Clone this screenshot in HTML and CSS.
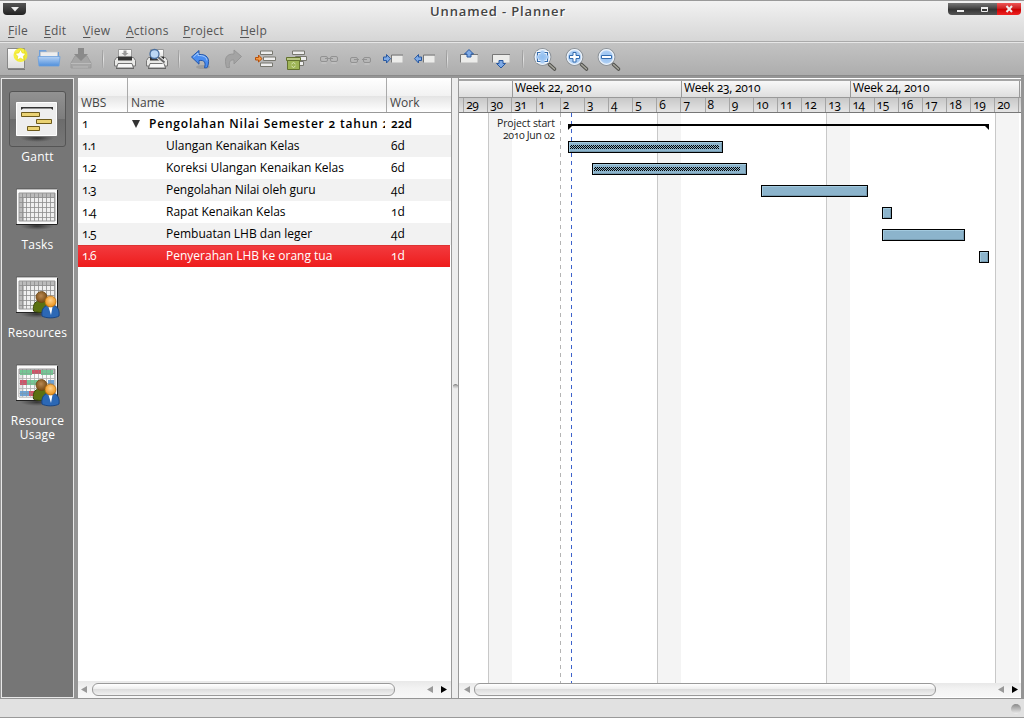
FILE: index.html
```
<!DOCTYPE html>
<html lang="id">
<head>
<meta charset="utf-8">
<title>Unnamed - Planner</title>
<link rel="stylesheet" href="styles.css">
</head>
<body>
<svg class="defs" width="0" height="0" aria-hidden="true">
  <defs>
    <linearGradient id="blue" x1="0" y1="0" x2="0" y2="1"><stop offset="0" stop-color="#b7d2f3"/><stop offset="1" stop-color="#4f8fdc"/></linearGradient>
    <linearGradient id="paper" x1="0" y1="0" x2="0" y2="1"><stop offset="0" stop-color="#ffffff"/><stop offset="1" stop-color="#dededc"/></linearGradient>
    <radialGradient id="lens"><stop offset="0" stop-color="#8fbdf0"/><stop offset=".65" stop-color="#a9ccf4"/><stop offset="1" stop-color="#d3e4f7"/></radialGradient>
    <radialGradient id="brown" cx=".45" cy=".4"><stop offset="0" stop-color="#b98850"/><stop offset="1" stop-color="#80541f"/></radialGradient>
    <radialGradient id="orange" cx=".5" cy=".4"><stop offset="0" stop-color="#ffd08a"/><stop offset="1" stop-color="#ee9a28"/></radialGradient>
    <radialGradient id="shade"><stop offset="0" stop-color="#222" stop-opacity=".8"/><stop offset="1" stop-color="#333" stop-opacity="0"/></radialGradient>
    <pattern id="cells" width="4" height="5" patternUnits="userSpaceOnUse"><path d="M0 .5H4M.5 0V5" stroke="#8d8d8d" stroke-width=".8"/></pattern>
    <pattern id="hatch" width="2" height="2" patternUnits="userSpaceOnUse"><path d="M0 0h1v1h-1zM1 1h1v1h-1z" fill="#000"/></pattern>
    <g id="sheet">
      <ellipse cx="23" cy="39" rx="17" ry="4" fill="url(#shade)"/>
      <path d="M2.500 2.500h41v35h-41z" fill="#fafafa" stroke="#fff"/>
      <path d="M2.500 37.500v-35.500h40.500" fill="none" stroke="#444" opacity=".7"/>
      <path d="M2 37.500h41.500v-35" fill="none" stroke="#222"/>
      <path d="M5 6h36v28H5z" fill="#efefef"/>
      <path d="M5 6h36v5H5zM5 11h5v23H5z" fill="#bbb"/>
      <path d="M5 6h36v28H5z" fill="url(#cells)" stroke="#999"/>
    </g>
    <g id="people">
      <path d="M19.500 36c-1-7 2-10.500 8-10.500 5 0 8 3 8 10-4 2.500-12 2.500-16 .5z" fill="#5b7112" stroke="#39480a"/>
      <circle cx="27.500" cy="22" r="5.500" fill="url(#brown)" stroke="#68420f" stroke-width=".7"/>
      <path d="M28 41c-1-8 3-11 8.500-11s9.500 3 8.500 11c-4 2.500-13 2.500-17 0z" fill="#2c68b5" stroke="#194684"/>
      <path d="M34.500 32h4l-1.500 8z" fill="#fff"/>
      <circle cx="36.500" cy="26.500" r="5.500" fill="url(#orange)" stroke="#b36807" stroke-width=".7"/>
    </g>
    <g id="printer">
      <path d="M9.500 6.500h13v9h-13z" fill="url(#paper)" stroke="#999"/>
      <path d="M7.500 14.500h17l2 3v5.500h-21V17.500z" fill="#e9e9e7" stroke="#777"/>
      <path d="M9 13.500h14v4H9z" fill="#333"/>
      <path d="M9 20.500h14l1.500 4.500h-17z" fill="#f7f7f7" stroke="#555" stroke-width=".8"/>
      <path d="M7 25.500h18" stroke="#666"/>
    </g>
    <g id="magnifier">
      <path d="M21.500 21.500l5 4.500" stroke="#50504c" stroke-width="3.600" stroke-linecap="round"/>
      <path d="M21.500 21.500l5 4.500" stroke="#a5a59c" stroke-width="1.600" stroke-linecap="round"/>
      <circle cx="14.500" cy="14" r="8.300" fill="url(#lens)" stroke="#8d9399" stroke-width="1.200"/>
      <circle cx="14.500" cy="14" r="7.300" fill="none" stroke="#edf3fa" stroke-width="1.200"/>
    </g>
    <g id="link">
      <rect x="0.500" y="0.500" width="7" height="5" rx="1.500" fill="none" stroke="#929292"/>
      <path d="M1.500 7h5" stroke="#c8c8c8"/>
    </g>
  </defs>
</svg>

<div class="window">
  <header class="top">
    <div class="titlebar">
      <div class="window-menu"><svg width="8" height="5"><path d="M0 0h8l-4 4.500z" fill="#eee"/></svg></div>
      <div class="title">Unnamed - Planner</div>
      <div class="window-buttons">
        <span class="wbtn"><svg width="25" height="12"><path d="M9 7h7v2H9z" fill="#eee"/></svg></span>
        <span class="wbtn"><svg width="24" height="12"><path d="M8.500 4.500h6v4h-6z" fill="none" stroke="#eee"/><path d="M8 5h7" stroke="#eee" stroke-width="2"/></svg></span>
        <span class="wbtn close"><svg width="24" height="12"><path d="M9.500 3l5.500 6M15 3l-5.500 6" stroke="#eee" stroke-width="2"/></svg></span>
      </div>
    </div>
    <nav class="menubar">
      <span class="menu m1"><u>F</u>ile</span><span class="menu m2"><u>E</u>dit</span><span class="menu m3"><u>V</u>iew</span><span class="menu m4"><u>A</u>ctions</span><span class="menu m5"><u>P</u>roject</span><span class="menu m6"><u>H</u>elp</span>
    </nav>
  </header>

  <div class="toolbar">
    <svg class="tool" viewBox="0 0 32 32"><path d="M6.500 5.500h17v20h-17z" fill="url(#paper)" stroke="#888"/><path d="M7 26.500h17" stroke="#555" opacity=".6"/><circle cx="19.500" cy="12" r="7" fill="#f5ee24" opacity=".85"/><path d="M19.500 6.500l1.700 3.400 3.800.6-2.700 2.700.6 3.800-3.400-1.800-3.400 1.800.6-3.800L14 10.500l3.800-.6z" fill="#fff" stroke="#e8d800" stroke-width=".6"/></svg>
    <svg class="tool" viewBox="0 0 32 32"><path d="M6 7h7l1 2h12v8H6z" fill="#6f9fd9"/><path d="M7.500 9h17v6h-17z" fill="#eee" stroke="#c8c8c8" stroke-width=".7"/><path d="M5 13.500h22l-1 9.500H6z" fill="url(#blue)" stroke="#6b9fdd" stroke-width=".8"/></svg>
    <svg class="tool" viewBox="0 0 32 32"><path d="M10 13h12l4 7v5H6v-5z" fill="#a5a5a5" stroke="#9b9b9b"/><path d="M6 20.500h20" stroke="#bcbcbc"/><path d="M13 5h6v6h4l-7 7-7-7h4z" fill="#8a8a8a"/><path d="M8 24h15" stroke="#bcbcbc"/></svg>
    <i class="sep"></i>
    <svg class="tool" viewBox="0 0 32 32"><use href="#printer"/><path d="M14.500 7.500h3v2.500h2L16 13l-3.500-3h2z" fill="#999"/></svg>
    <svg class="tool" viewBox="0 0 32 32"><use href="#printer"/><path d="M17 14l6.500 5.500" stroke="#eee" stroke-width="4"/><path d="M17 14l6.500 5.500" stroke="#666" stroke-width="2"/><circle cx="13.500" cy="11" r="4.500" fill="#bcd7f4" stroke="#496f9f" stroke-width="1.300"/></svg>
    <i class="sep"></i>
    <svg class="tool" viewBox="0 0 32 32"><ellipse cx="18" cy="24" rx="7" ry="2" fill="#777" opacity=".35"/><path d="M6.500 14L14 7.500v4c8-.5 11.500 4 8.500 12.500 0 .7-1.500.8-3 .8 1.500-5.300.2-8-5.500-7.300v3.700z" fill="#4a8df0" stroke="#2456aa"/><path d="M8.500 14L13 10v2.500c5 0 8.500 1 9 5" fill="none" stroke="#a9cdfb"/></svg>
    <svg class="tool" viewBox="0 0 32 32"><path d="M24.500 13.500L17 7v4C9 11 7 15 9.500 24.500h3c-.9-5.500.6-8 4.500-7.500v4z" fill="#a4a4a4" stroke="#969696"/></svg>
    <svg class="tool" viewBox="0 0 32 32"><path d="M11.500 8h12v3.500h-12zM14.500 14h12v3.500h-12zM11.500 20h12v3.500h-12z" fill="#eee" stroke="#77776f"/><path d="M6.500 14.500h3v-2.500l3.500 3.700-3.500 3.300v-2h-3z" fill="#f49a45" stroke="#b7500b"/></svg>
    <svg class="tool" viewBox="0 0 32 32"><path d="M11.500 8h12v3.500h-12zM14.500 13.500h11v4h-11zM15.500 18.500h7v4h-7z" fill="#eee" stroke="#77776f"/><path d="M5.500 14.500h14v3h-14z" fill="#bac786" stroke="#63722f"/><path d="M6.500 17.500h12v9h-12z" fill="#9fb557" stroke="#63722f"/><path d="M10.500 21l2-1.500 2 1.500M14.500 23l-2 1.500-2-1.500" fill="none" stroke="#d9e4b6"/></svg>
    <svg class="tool" viewBox="0 0 32 32"><use href="#link" x="7" y="13"/><use href="#link" x="17" y="13"/><path d="M12 15.500h8" stroke="#929292"/></svg>
    <svg class="tool" viewBox="0 0 32 32"><use href="#link" x="5" y="14"/><use href="#link" x="18" y="14"/><path d="M9 16.500h5M17 16.500h5" stroke="#929292"/></svg>
    <svg class="tool" viewBox="0 0 32 32"><path d="M14.500 12.500h11v7h-11z" fill="#ececea"/><path d="M14.500 19.500v-7.500h11.500" fill="none" stroke="#777"/><path d="M6.500 14h3v-2.500l4 4.200-4 4.300v-2.500h-3z" fill="#7eaae6" stroke="#2858a0"/></svg>
    <svg class="tool" viewBox="0 0 32 32"><path d="M14.500 12.500h11v7h-11z" fill="#ececea"/><path d="M14.500 19.500v-7.500h11.500" fill="none" stroke="#777"/><path d="M12.500 14H9.500v-2.500l-4 4.200 4 4.300v-2.500h3z" fill="#7eaae6" stroke="#2858a0"/></svg>
    <i class="sep"></i>
    <svg class="tool" viewBox="0 0 32 32"><path d="M7.500 11.500h17v8h-17z" fill="#ececea"/><path d="M7.500 19.500v-8h17.500" fill="none" stroke="#777"/><path d="M14 14v-3h-2.500L16 6.500l4.500 4.500H18v3z" fill="#7eaae6" stroke="#2858a0"/></svg>
    <svg class="tool" viewBox="0 0 32 32"><path d="M7.500 11.500h17v8h-17z" fill="#ececea"/><path d="M7.500 19.500v-8h17.500" fill="none" stroke="#777"/><path d="M14 17.500v3h-2.500l4.500 4.500 4.500-4.500H18v-3z" fill="#7eaae6" stroke="#2858a0"/></svg>
    <i class="sep"></i>
    <svg class="tool zoom" viewBox="0 0 32 32"><use href="#magnifier"/><path d="M9.500 12.500v-3h3M16.500 9.500h3v3M19.500 15.500v3h-3M12.500 18.500h-3v-3" fill="none" stroke="#fff" stroke-width="2.500"/><path d="M9.500 12.500v-3h3M16.500 9.500h3v3M19.500 15.500v3h-3M12.500 18.500h-3v-3" fill="none" stroke="#346cae" stroke-width="1.200"/></svg>
    <svg class="tool" viewBox="0 0 32 32"><use href="#magnifier"/><path d="M13 9.500h3v3h3.500v3H16v3.500h-3v-3.500H9.500v-3H13z" fill="#fff" stroke="#346cae"/></svg>
    <svg class="tool" viewBox="0 0 32 32"><use href="#magnifier"/><path d="M9.500 12.500h10v3h-10z" fill="#fff" stroke="#346cae"/></svg>
  </div>

  <main class="main">
    <aside class="sidebar">
      <div class="view">
        <div class="view-icon active"><svg width="46" height="44"><ellipse cx="23" cy="39" rx="17" ry="4" fill="url(#shade)"/><path d="M2.500 3.500h40v33h-40z" fill="#eee" stroke="#fff"/><path d="M2 37.500h41.500v-34" fill="none" stroke="#777"/><path d="M7 8h32v3l-2-1.500H9L7 11z" fill="#333"/><path d="M7.500 13.500h18v4h-18zM22.500 20.500h15v4h-15zM13.500 27.500h12v4h-12z" fill="#ead273" stroke="#6d5a1b"/></svg></div>
        <div class="view-label">Gantt</div>
      </div>
      <div class="view">
        <div class="view-icon"><svg width="46" height="44"><use href="#sheet"/></svg></div>
        <div class="view-label">Tasks</div>
      </div>
      <div class="view">
        <div class="view-icon"><svg width="46" height="44"><use href="#sheet"/><use href="#people"/></svg></div>
        <div class="view-label">Resources</div>
      </div>
      <div class="view">
        <div class="view-icon"><svg width="46" height="44"><use href="#sheet"/><path d="M5 11h36v23H5z" fill="#fff" opacity=".6"/><path d="M6 7h12v5H6zM27 7h12v5H27zM13 17h12v5H13z" fill="#75c795"/><path d="M18 7h9v4h-9zM6 17h7v5H6zM15 28h6v5h-6z" fill="#cf5468"/><path d="M6 28h9v5H6zM34 17h6v5h-6z" fill="#6ea3d4"/><path d="M5 6h36v28H5z" fill="url(#cells)" opacity=".45"/><use href="#people"/></svg></div>
        <div class="view-label two">Resource Usage</div>
      </div>
    </aside>

    <section class="tree">
      <div class="tree-head"><span>WBS</span><span>Name</span><span>Work</span></div>
      <div class="tree-body">
        <div class="row summary"><span>1</span><span class="name"><svg class="expander" width="8" height="8"><path d="M0 0h8l-4 8z" fill="#333"/></svg><b class="sum">Pengolahan Nilai Semester 2 tahun 2</b></span><span><b>22d</b></span></div>
        <div class="row"><span>1.1</span><span class="name">Ulangan Kenaikan Kelas</span><span>6d</span></div>
        <div class="row"><span>1.2</span><span class="name">Koreksi Ulangan Kenaikan Kelas</span><span>6d</span></div>
        <div class="row"><span>1.3</span><span class="name guru">Pengolahan Nilai oleh guru</span><span>4d</span></div>
        <div class="row"><span>1.4</span><span class="name">Rapat Kenaikan Kelas</span><span>1d</span></div>
        <div class="row"><span>1.5</span><span class="name">Pembuatan LHB dan leger</span><span>4d</span></div>
        <div class="row selected"><span>1.6</span><span class="name">Penyerahan LHB ke orang tua</span><span>1d</span></div>
      </div>
      <div class="scroll tree-scroll">
        <svg width="6" height="7"><path d="M6 0v7L0 3.500z" fill="#999"/></svg><div class="thumb"></div>
        <svg class="back" width="6" height="7"><path d="M6 0v7L0 3.500z" fill="#999"/></svg><svg width="6" height="7"><path d="M0 0v7l6-3.500z" fill="#000"/></svg>
      </div>
    </section>

    <div class="handle"><span></span></div>

    <section class="gantt">
      <div class="weeks"><span></span><span>Week 22, 2010</span><span>Week 23, 2010</span><span>Week 24, 2010</span><span></span></div>
      <div class="days"><span></span><span>29</span><span>30</span><span>31</span><span>1</span><span>2</span><span>3</span><span>4</span><span>5</span><span>6</span><span>7</span><span>8</span><span>9</span><span>10</span><span>11</span><span>12</span><span>13</span><span>14</span><span>15</span><span>16</span><span>17</span><span>18</span><span>19</span><span>20</span><span></span></div>
      <svg class="chart" width="562" height="570" viewBox="459 113 562 570">
        <path d="M488 113h24v570h-24zM657 113h24v570h-24zM826 113h24v570h-24zM995 113h24v570h-24z" fill="#f4f4f4"/>
        <path d="M488.500 113v570M657.500 113v570M826.500 113v570M995.500 113v570" stroke="#c8c8c8"/>
        <path d="M560.500 113v570" stroke="#b4b4b4" stroke-dasharray="4 4"/>
        <path class="today" d="M571.500 113v570"/>
        <text x="497" y="127" textLength="58">Project start</text>
        <text x="503" y="139" textLength="52">2010 Jun 02</text>
        <path d="M568 124h421v6l-4-4H572l-4 4z"/>
        <g class="bars">
          <rect x="568.500" y="141.500" width="154" height="11"/>
          <rect x="592.500" y="163.500" width="154" height="11"/>
          <rect x="761.500" y="185.500" width="106" height="11"/>
          <rect x="882.500" y="207.500" width="9" height="11"/>
          <rect x="882.500" y="229.500" width="82" height="11"/>
          <rect x="979.500" y="251.500" width="9" height="11"/>
        </g>
        <path class="bar-light" d="M569.500 152v-9.500H722M593.500 174v-9.500H746M762.500 196v-9.500H867M883.500 218v-9.500H891M883.500 240v-9.500H964M980.500 262v-9.500H988"/>
        <path class="bar-dark" d="M570 151.500h151.500V143M594 173.500h151.500V165M763 195.500h103.500V187M884 217.500h6.500V209M884 239.500h79.500V231M981 261.500h6.500V253"/>
        <path d="M570 145h149v4H570zM594 167h146v4H594z" fill="url(#hatch)"/>
      </svg>
      <div class="scroll gantt-scroll">
        <svg width="6" height="7"><path d="M6 0v7L0 3.500z" fill="#999"/></svg><div class="thumb"></div>
        <svg class="back" width="6" height="7"><path d="M6 0v7L0 3.500z" fill="#999"/></svg><svg width="6" height="7"><path d="M0 0v7l6-3.500z" fill="#000"/></svg>
      </div>
    </section>
  </main>
  <footer class="status"><span class="grip"></span></footer>
</div>
</body>
</html>
```
FILE: styles.css
```
* { box-sizing: border-box; }
body { margin: 0; font: 12px/22px "Open Sans", "Noto Sans", sans-serif; font-feature-settings: "onum" 1, "zero" 1; color: #000; overflow: hidden; }
svg { display: block; flex: none; }
.defs { height: 0; }
.window { width: 1024px; height: 718px; display: flex; flex-direction: column; background: #959595; }

.top { height: 43px; border-top: 1px solid #999; border-bottom: 1px solid #e6e6e6; background: linear-gradient(#f2f2f2, #d5d5d5); box-shadow: inset 0 -1px #aaa; display: flex; flex-direction: column; }
.titlebar { height: 20px; display: flex; justify-content: space-between; align-items: flex-start; padding: 2px 3px 0; }
.window-menu { width: 23px; height: 12px; margin-right: 22px; background: linear-gradient(#555, #222); border-radius: 0 0 4px 4px; display: flex; align-items: center; justify-content: center; }
.title { font-weight: 600; font-size: 13px; line-height: 18px; letter-spacing: .85px; color: #444; text-shadow: 1px 1px #fff; margin-top: -1px; }
.window-buttons { display: flex; border-radius: 0 0 4px 4px; overflow: hidden; }
.wbtn { height: 12px; background: linear-gradient(#777, #444 45%, #333 50%, #555); }
.close { background: linear-gradient(#e55, #c22 45%, #c00 50%, #e22); }
.menubar { display: flex; padding-left: 8px; color: #555; line-height: 20px; height: 20px; letter-spacing: .25px; }
.menu { flex: none; }
.menu u { text-underline-offset: 2px; }
.m1 { width: 36px; } .m2 { width: 39px; } .m3 { width: 43px; } .m4 { width: 57px; } .m5 { width: 57px; }

.toolbar { height: 32px; display: flex; padding-left: 1px; background: linear-gradient(#c3c3c3, #adadad); }
.tool { width: 32px; height: 32px; }
.zoom { margin-left: -1px; }
.sep { width: 12px; height: 18px; margin-top: 7px; background: linear-gradient(#aaa, #999, #aaa) 5px 0 / 1px 100% no-repeat, linear-gradient(#bbb, #e4e4e4, #bbb) 6px 0 / 1px 100% no-repeat; }

.main { height: 624px; display: flex; padding: 2px 2px 1px 1px; border-top: 1px solid #8a8a8a; }
.sidebar { width: 73px; margin-right: 4px; border: 1px solid #e8e8e8; background: #767676; padding-top: 12px; color: #fff; }
.view { height: 88px; display: flex; flex-direction: column; align-items: center; text-align: center; }
.view-icon { width: 57px; height: 56px; border: 1px solid transparent; display: flex; justify-content: center; align-items: flex-end; padding: 0 1px 3px 0; }
.active { border-color: #555; border-radius: 3px; background: linear-gradient(#929292, #7d7d7d 50%, #6c6c6c 50%, #777); }
.view-label { line-height: 14px; margin-top: 3px; letter-spacing: .2px; white-space: nowrap; }
.two { width: 60px; white-space: normal; }

.tree { width: 373px; display: flex; flex-direction: column; background: #fff; }
.tree-head { height: 35px; display: flex; align-items: flex-end; color: #444; border-bottom: 1px solid #999; background: linear-gradient(#fff, #f2f2f2 52%, #e4e4e4 53%, #fff); }
.tree-head span { height: 34px; padding: 14px 0 0 3px; flex: none; border-right: 1px solid #aaa; }
.tree-head span:nth-child(1) { width: 50px; }
.tree-head span:nth-child(2) { width: 259px; }
.tree-head span:nth-child(3) { width: 64px; border: 0; }
.tree-body { flex: 1; }
.row { height: 22px; display: flex; white-space: nowrap; }
.row:nth-child(even) { background: #f2f2f2; }
.row > span { flex: none; width: 62px; padding-left: 4px; overflow: hidden; }
.row > span:first-child { width: 50px; letter-spacing: -.9px; }
.row .name { width: 259px; padding-left: 38px; letter-spacing: 0; }
.row .guru { letter-spacing: -.05px; }
.row.summary .name { width: 257px; margin-right: 2px; display: flex; align-items: center; padding-left: 4px; }
.expander { margin-right: 9px; }
.row b { font-weight: 600; }
.row .sum { letter-spacing: .8px; }
.row.selected { background: linear-gradient(#f23a3e, #ee1c1c); color: #fff; border-top: 1px solid #dd3333; line-height: 20px; margin-right: 1px; }

.scroll { display: flex; align-items: center; background: linear-gradient(#e8e8e8, #f2f2f2 40%, #f7f7f7); }
.thumb { height: 13px; border: 1px solid #999; border-radius: 6px; background: linear-gradient(#fff, #eee 45%, #ddd 50%, #f0f0f0); margin-left: 5px; }
.tree-scroll { height: 17px; padding: 1px 4px 2px 3px; }
.tree-scroll .thumb { width: 303px; }
.back { margin: 0 8px 0 auto; }

.handle { width: 8px; background: #ededed; border: solid #999; border-width: 0 1px; display: flex; align-items: center; justify-content: center; padding-bottom: 3px; }
.handle span { width: 5px; height: 5px; border-top: 1px solid #888; border-radius: 3px; background: linear-gradient(#aaa, #eee); }

.gantt { width: 562px; display: flex; flex-direction: column; background: #fff; overflow: hidden; }
.weeks { height: 19px; margin-top: 1px; display: grid; grid-template-columns: 53px 169px 169px 169px 1fr; border-top: 2px solid #a5a5a5; background: linear-gradient(#f8f8f8, #dedede); border-bottom: 1px solid #999; line-height: 14px; letter-spacing: -.25px; }
.weeks span + span { border-left: 1px solid #999; padding-left: 2px; }
.days { height: 15px; display: grid; grid-template-columns: 4.200px repeat(23, 24.143px) 1fr; background: linear-gradient(#c8c8c8, #e4e4e4); border-bottom: 1px solid #777; line-height: 14px; letter-spacing: -.4px; }
.days span + span { border-left: 1px solid #a5a5a5; padding-left: 2px; }
.chart text { font-size: 10.500px; fill: #222; }
.today { stroke: #3c62cc; stroke-dasharray: 4 4; }
.bars rect { fill: #8cb4cc; stroke: #000; }
.bar-light, .bar-dark { fill: none; stroke: #a3cadf; }
.bar-dark { stroke: #7599ae; }
.gantt-scroll { height: 14px; padding: 0 3px 1px 5px; flex: none; }
.gantt-scroll .thumb { width: 462px; margin-left: 4px; }

.status { height: 19px; background: #e1e1e1; border-bottom: 1px solid #999; display: flex; justify-content: flex-end; padding: 5px 3px 0 0; }
.grip { width: 10px; height: 10px; border-radius: 5px; background: linear-gradient(#888, #eee); }
```
